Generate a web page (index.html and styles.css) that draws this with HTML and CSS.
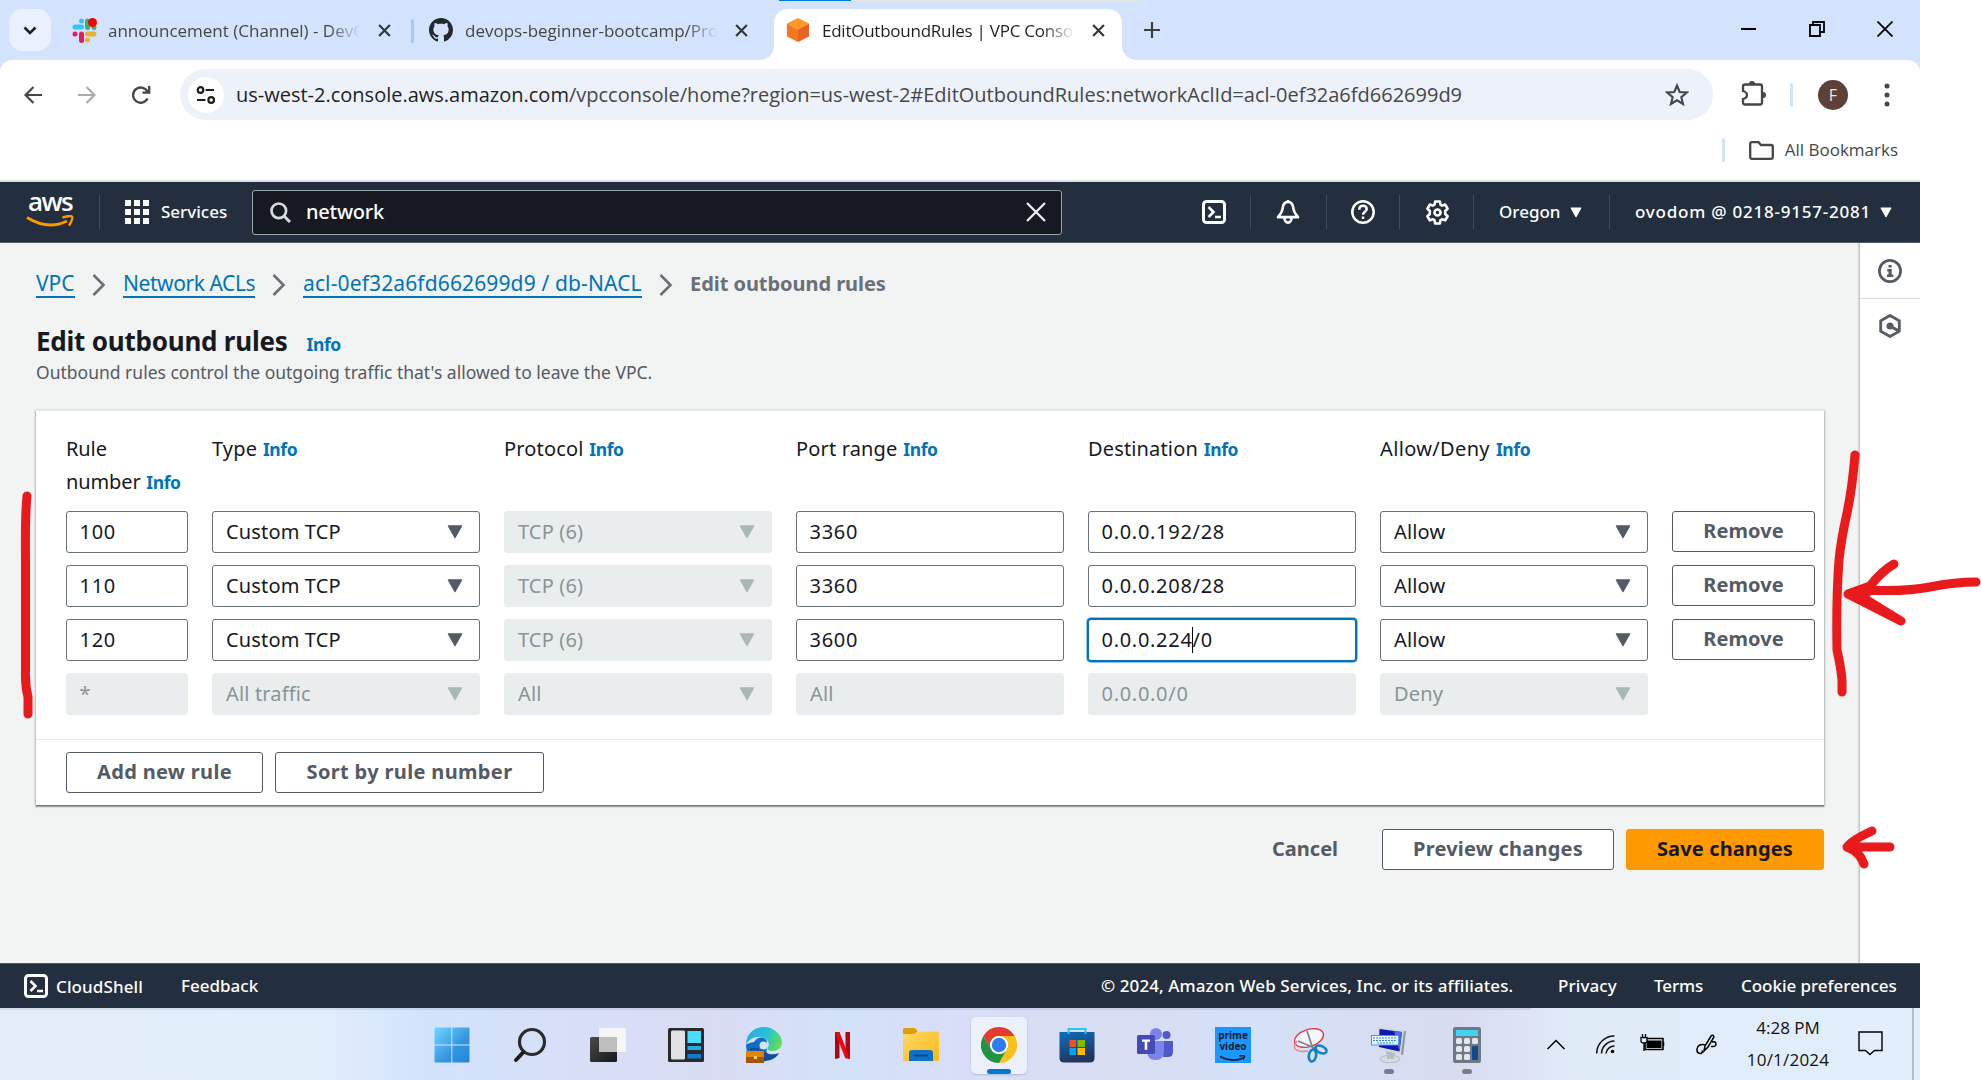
FILE: index.html
```html
<!DOCTYPE html>
<html lang="en">
<head>
<meta charset="utf-8">
<title>EditOutboundRules | VPC Console</title>
<link rel="stylesheet" href="styles.css">
</head>
<body>
<svg width="0" height="0" class="defs">
  <symbol id="x" viewBox="0 0 12 12"><path d="M1 1l10 10M11 1L1 11" fill="none" stroke="currentColor" stroke-width="2"/></symbol>
  <symbol id="tri" viewBox="0 0 16 14"><path d="M1.500 1h13L8 12.500z" fill="currentColor" stroke="currentColor" stroke-width="1.500" stroke-linejoin="round"/></symbol>
  <symbol id="shell" viewBox="0 0 24 24"><rect x="1.500" y="1.500" width="21" height="21" rx="3" fill="none" stroke="#fff" stroke-width="3"/><path d="M6.500 7l5 5-5 5M13 17h6" fill="none" stroke="#fff" stroke-width="2.600"/></symbol>
  <symbol id="chev" viewBox="0 0 14 22"><path d="M1.500 1l10 10-10 10" fill="none" stroke="#687078" stroke-width="2.600"/></symbol>
</svg>
<div class="window">
  <div class="tabstrip">
    <div class="tabsearch"><svg width="14" height="9" viewBox="0 0 14 9"><path d="M1.500 1.500L7 7l5.500-5.500" fill="none" stroke="#1f1f1f" stroke-width="2.600"/></svg></div>
    <div class="tab t1">
      <svg class="fav" width="25" height="25" viewBox="0 0 25 25" stroke-width="5" stroke-linecap="round"><path d="M3 9h6.500M9.500 3v0" stroke="#36c5f0"/><path d="M15.500 3v6.500" stroke="#2eb67d"/><path d="M22 9.500v0" stroke="#2eb67d"/><path d="M15.500 16H22M15.500 22v0" stroke="#ecb22e"/><path d="M9.500 16v6.500M3 16v0" stroke="#e01e5a"/><circle cx="20.500" cy="4.500" r="4.500" fill="#f00"/></svg>
      <span class="tabtext">announcement (Channel) - DevO</span>
      <svg class="close" width="13" height="13"><use href="#x"/></svg>
    </div>
    <i class="tabsep"></i>
    <div class="tab t2">
      <svg class="fav" width="24" height="24" viewBox="0 0 16 16"><path fill="#24292f" d="M8 0C3.580 0 0 3.580 0 8c0 3.540 2.290 6.530 5.470 7.590.4.070.55-.17.55-.38 0-.19-.01-.82-.01-1.490-2.010.37-2.530-.49-2.690-.94-.09-.23-.48-.94-.82-1.130-.28-.15-.68-.52-.01-.53.63-.01 1.080.58 1.230.82.72 1.210 1.870.87 2.330.66.070-.52.28-.87.51-1.070-1.780-.2-3.640-.89-3.640-3.950 0-.87.31-1.590.82-2.150-.08-.2-.36-1.020.08-2.120 0 0 .67-.21 2.200.82.64-.18 1.320-.27 2-.27s1.360.09 2 .27c1.530-1.040 2.200-.82 2.200-.82.44 1.100.16 1.920.08 2.120.51.56.82 1.270.82 2.150 0 3.070-1.870 3.750-3.650 3.950.29.25.54.73.54 1.480 0 1.070-.01 1.930-.01 2.200 0 .21.15.46.55.38A8.010 8.010 0 0 0 16 8c0-4.420-3.580-8-8-8z"/></svg>
      <span class="tabtext">devops-beginner-bootcamp/Pro</span>
      <svg class="close" width="13" height="13"><use href="#x"/></svg>
    </div>
    <div class="tab t3">
      <svg class="fav" width="22" height="24" viewBox="0 0 22 24"><path d="M11 0l11 5.500-11 6-11-6z" fill="#fd9827"/><path d="M0 5.500l11 6V24L0 18.500z" fill="#f6781e"/><path d="M22 5.500l-11 6V24l11-5.500z" fill="#ec6022"/></svg>
      <span class="tabtext">EditOutboundRules | VPC Conso</span>
      <svg class="close" width="13" height="13"><use href="#x"/></svg>
    </div>
    <svg class="plus" width="16" height="16" viewBox="0 0 16 16"><path d="M8 0v16M0 8h16" stroke="#3c4043" stroke-width="2.200"/></svg>
    <div class="winbtns">
      <svg width="16" height="16" viewBox="0 0 16 16"><path d="M0 8h15" stroke="#000" stroke-width="2"/></svg>
      <svg width="16" height="16" viewBox="0 0 16 16"><path d="M1 4h10v11H1zM4 4V1h11v10h-4" fill="none" stroke="#000" stroke-width="1.800"/></svg>
      <svg width="16" height="16" viewBox="0 0 16 16"><path d="M.5.5l15 15M15.500.5l-15 15" stroke="#000" stroke-width="1.800"/></svg>
    </div>
  </div>
  <div class="chrome">
    <div class="toolbar">
      <svg class="back" width="18" height="18" viewBox="0 0 18 18"><path d="M18 9H2M9.500 1L1.500 9l8 8" fill="none" stroke="#444746" stroke-width="2.200"/></svg>
      <svg class="fwd" width="18" height="18" viewBox="0 0 18 18"><path d="M0 9h16M8.500 1l8 8-8 8" fill="none" stroke="#a9abac" stroke-width="2.200"/></svg>
      <svg class="reload" width="20" height="20" viewBox="0 0 20 20"><path d="M16.500 13.500a7.600 7.600 0 1 1 .2-6.300M18.200 1v6.700h-6.700" fill="none" stroke="#444746" stroke-width="2.300"/></svg>
      <div class="omnibox">
        <div class="tune"><svg width="20" height="18" viewBox="0 0 20 18" fill="none" stroke="#1f1f1f" stroke-width="2.200"><circle cx="4.500" cy="4" r="2.800"/><path d="M9.500 4H18M1 14h8.500"/><circle cx="15.200" cy="14" r="2.800"/></svg></div>
        <span class="url"><b>us-west-2.console.aws.amazon.com</b>/vpcconsole/home?region=us-west-2#EditOutboundRules:networkAclId=acl-0ef32a6fd662699d9</span>
        <svg class="star" width="24" height="23" viewBox="0 0 24 23"><path d="M12 2.500l2.700 6.500 7 .5-5.400 4.600 1.700 6.900-6-3.700-6 3.700 1.700-6.900L2.300 9.500l7-.5z" fill="none" stroke="#444746" stroke-width="2.100"/></svg>
      </div>
      <svg class="puzzle" width="25" height="26" viewBox="0 0 25 26"><path d="M2 6.500q0-2 2-2h15q2 0 2 2v16q0 2-2 2H4q-2 0-2-2V19q4-1 4-4t-4-4z" fill="none" stroke="#444746" stroke-width="2.300"/><path d="M8 4a3 3 0 0 1 6 0zM22 12a3 3 0 0 1 0 6z" fill="#444746"/></svg>
      <i class="vsep"></i>
      <div class="avatar">F</div>
      <svg class="dots" width="6" height="26" viewBox="0 0 6 26" fill="#444746"><circle cx="3" cy="4" r="2.500"/><circle cx="3" cy="13" r="2.500"/><circle cx="3" cy="22" r="2.500"/></svg>
    </div>
    <div class="bookmarks">
      <i class="vsep"></i>
      <svg width="25" height="19" viewBox="0 0 25 19"><path d="M1.200 3q0-1.800 1.800-1.800h6.500L12 4h10q1.800 0 1.800 1.800V16q0 1.800-1.800 1.800H3Q1.200 17.800 1.200 16z" fill="none" stroke="#444746" stroke-width="2.300"/></svg>
      <span>All Bookmarks</span>
    </div>
  </div>
  <div class="awsnav">
    <div class="logo"><span>aws</span><svg width="48" height="14" viewBox="0 0 48 14"><path d="M1 2.500q21 13 40 3.500" fill="none" stroke="#f90" stroke-width="2.800"/><path d="M36.500 2.500q8-2.500 9.500-.8t-3 9" fill="none" stroke="#f90" stroke-width="2.400"/></svg></div>
    <i class="nsep s1"></i>
    <svg class="grid" width="24" height="24" viewBox="0 0 24 24" fill="#fff"><path d="M0 0h6v6H0zM9 0h6v6H9zM18 0h6v6h-6zM0 9h6v6H0zM9 9h6v6H9zM18 9h6v6h-6zM0 18h6v6H0zM9 18h6v6H9zM18 18h6v6h-6z"/></svg>
    <span class="services">Services</span>
    <div class="search">
      <svg width="21" height="21" viewBox="0 0 21 21"><circle cx="8.800" cy="8.800" r="7.300" fill="none" stroke="#d5dbdb" stroke-width="2.700"/><path d="M14 14l6 6" stroke="#d5dbdb" stroke-width="3"/></svg>
      <span>network</span>
      <svg class="clear" width="20" height="20" viewBox="0 0 20 20"><path d="M1 1l18 18M19 1L1 19" stroke="#eaeded" stroke-width="2.300"/></svg>
    </div>
    <svg class="i-shell" width="24" height="24"><use href="#shell"/></svg>
    <i class="nsep"></i>
    <svg class="i-bell" width="24" height="24" viewBox="0 0 24 24" fill="none" stroke="#fff" stroke-width="2.700"><path d="M12 2C8.500 2 6.800 5 6.500 9 6.200 12.500 4 14.500 2 17.200h20c-2-2.700-4.200-4.700-4.500-8.200C17.200 5 15.500 2 12 2z" stroke-linejoin="round"/><path d="M8.500 18a3.500 4.600 0 0 0 7 0M12 0v3"/></svg>
    <i class="nsep"></i>
    <svg class="i-help" width="24" height="24" viewBox="0 0 24 24" fill="none" stroke="#fff" stroke-width="2.500"><circle cx="12" cy="12" r="10.700"/><path d="M8.300 9.800q0-4 3.700-4t3.700 3.300c0 2.700-3.700 2.500-3.700 5.700M12 16.500V19"/></svg>
    <i class="nsep"></i>
    <svg class="i-gear" width="25" height="25" viewBox="0 0 24 24" fill="none" stroke="#fff" stroke-width="2.500" stroke-linejoin="round"><path d="M9.700 1.500h4.600l.6 3 1.500.9 3-1 2.300 4-2.300 2.100v2.900l2.300 2.200-2.300 3.900-3-1-1.500.9-.6 3.100H9.700l-.6-3.100-1.500-.9-3 1-2.300-3.900 2.300-2.200v-2.900L2.300 8.400l2.300-4 3 1 1.500-.9z"/><circle cx="12" cy="12" r="2.900"/></svg>
    <i class="nsep"></i>
    <span class="region">Oregon</span><svg class="ntri" width="12" height="11"><use href="#tri"/></svg>
    <i class="nsep s5"></i>
    <span class="acct">ovodom @ 0218-9157-2081</span><svg class="ntri" width="12" height="11"><use href="#tri"/></svg>
  </div>
  <div class="body">
    <div class="main">
      <div class="crumbs">
        <a class="c1">VPC</a><svg width="14" height="22"><use href="#chev"/></svg><a class="c2">Network ACLs</a><svg width="14" height="22"><use href="#chev"/></svg><a class="c3">acl-0ef32a6fd662699d9 / db-NACL</a><svg width="14" height="22"><use href="#chev"/></svg><b>Edit outbound rules</b>
      </div>
      <div class="title"><h1>Edit outbound rules</h1><a class="info">Info</a></div>
      <p class="sub">Outbound rules control the outgoing traffic that's allowed to leave the VPC.</p>
      <div class="card">
        <div class="rules">
          <div class="th">Rule<br>number <a class="info">Info</a></div>
          <div class="th">Type <a class="info">Info</a></div>
          <div class="th">Protocol <a class="info">Info</a></div>
          <div class="th">Port range <a class="info">Info</a></div>
          <div class="th">Destination <a class="info">Info</a></div>
          <div class="th wide">Allow/Deny <a class="info">Info</a></div>
          <div></div>

          <div class="f n">100</div>
          <div class="f">Custom TCP<svg width="16" height="14"><use href="#tri"/></svg></div>
          <div class="f d">TCP (6)<svg width="16" height="14"><use href="#tri"/></svg></div>
          <div class="f n">3360</div>
          <div class="f n">0.0.0.192/28</div>
          <div class="f">Allow<svg width="16" height="14"><use href="#tri"/></svg></div>
          <div class="btn">Remove</div>

          <div class="f n">110</div>
          <div class="f">Custom TCP<svg width="16" height="14"><use href="#tri"/></svg></div>
          <div class="f d">TCP (6)<svg width="16" height="14"><use href="#tri"/></svg></div>
          <div class="f n">3360</div>
          <div class="f n">0.0.0.208/28</div>
          <div class="f">Allow<svg width="16" height="14"><use href="#tri"/></svg></div>
          <div class="btn">Remove</div>

          <div class="f n">120</div>
          <div class="f">Custom TCP<svg width="16" height="14"><use href="#tri"/></svg></div>
          <div class="f d">TCP (6)<svg width="16" height="14"><use href="#tri"/></svg></div>
          <div class="f n">3600</div>
          <div class="f n focus">0.0.0.224<i class="caret"></i>/0</div>
          <div class="f">Allow<svg width="16" height="14"><use href="#tri"/></svg></div>
          <div class="btn">Remove</div>

          <div class="f n d">*</div>
          <div class="f d">All traffic<svg width="16" height="14"><use href="#tri"/></svg></div>
          <div class="f d">All<svg width="16" height="14"><use href="#tri"/></svg></div>
          <div class="f d">All</div>
          <div class="f n d">0.0.0.0/0</div>
          <div class="f d">Deny<svg width="16" height="14"><use href="#tri"/></svg></div>
        </div>
        <div class="cardfoot"><div class="btn add">Add new rule</div><div class="btn sort">Sort by rule number</div></div>
      </div>
      <div class="actions"><span class="cancel">Cancel</span><div class="btn preview">Preview changes</div><div class="btn save">Save changes</div></div>
    </div>
    <div class="side">
      <div class="sidecell"><svg width="24" height="24" viewBox="0 0 24 24"><circle cx="12" cy="12" r="10.600" fill="none" stroke="#545b64" stroke-width="2.700"/><path d="M10.500 6h3.200v2.500h-3.200zM9.300 10h4.400v5.500h1.600V18H9v-2.500h1.500v-3H9.300z" fill="#545b64"/></svg></div>
      <div class="sidecell"><svg width="24" height="24" viewBox="0 0 24 24"><path d="M12 1.500l9.300 5.200v10.600L12 22.500l-9.300-5.200V6.700z" fill="none" stroke="#545b64" stroke-width="2.800"/><circle cx="12" cy="12" r="3.500" fill="#545b64"/><path d="M12 12l8 4.500" stroke="#545b64" stroke-width="3"/></svg></div>
    </div>
  </div>
  <div class="footer">
    <svg width="24" height="24"><use href="#shell"/></svg><span class="f1">CloudShell</span><span class="f2">Feedback</span>
    <span class="f3">© 2024, Amazon Web Services, Inc. or its affiliates.</span><span class="f4">Privacy</span><span class="f5">Terms</span><span class="f6">Cookie preferences</span>
  </div>
  <div class="taskbar">
    <div class="apps">
      <div class="app"><svg width="36" height="36" viewBox="0 0 36 36"><defs><linearGradient id="w" x1="0" y1="0" x2="1" y2="1"><stop stop-color="#6fd6ff"/><stop offset=".6" stop-color="#3596e0"/><stop offset="1" stop-color="#1f86d8"/></linearGradient></defs><path d="M1.500.5h15.800v17H.5v-16a1 1 0 0 1 1-1zM18.300.5h16.200a1 1 0 0 1 1 1v16H18.300zM.5 18.500h16.800v17H1.500a1 1 0 0 1-1-1zM18.300 18.500h17.200v16a1 1 0 0 1-1 1H18.300z" fill="url(#w)"/></svg></div>
      <div class="app"><svg width="34" height="36" viewBox="0 0 34 36"><circle cx="19" cy="15" r="12.500" fill="none" stroke="#2b2b2b" stroke-width="3.200"/><path d="M10.500 25L3 33" stroke="#1c1c1c" stroke-width="4" stroke-linecap="round"/></svg></div>
      <div class="app"><svg width="36" height="36" viewBox="0 0 36 36"><defs><linearGradient id="tv" x1="0" y1="0" x2="1" y2="1"><stop stop-color="#4a4a4a"/><stop offset="1" stop-color="#181818"/></linearGradient></defs><rect y="10" width="27" height="25" rx="1.500" fill="url(#tv)"/><rect x="9" y="1" width="27" height="24" rx="1.500" fill="#f6f6f6"/><rect x="9" y="10" width="18" height="15" fill="#bdbdbd"/></svg></div>
      <div class="app"><svg width="36" height="36" viewBox="0 0 36 36"><rect y="1" width="36" height="34" rx="1.500" fill="#2a2a2a"/><rect x="3" y="3.500" width="14" height="29" rx="1.500" fill="#dfe1e4"/><path d="M19.500 4H33v12H19.500z" fill="#4cdcff"/><path d="M19.500 19H33v4H19.500z" fill="#27a9e8"/><path d="M19.500 27H33v4.500H19.500z" fill="#0a7ad8"/></svg></div>
      <div class="app"><svg width="36" height="36" viewBox="0 0 36 36"><defs><linearGradient id="e1" x1="0" y1=".3" x2="1" y2=".6"><stop stop-color="#2babe8"/><stop offset=".5" stop-color="#25c0d8"/><stop offset="1" stop-color="#62e04e"/></linearGradient></defs><path d="M8 15c4-6 13-6 13 1l-1 18C8 37 0 29 0 18q2-2 8-3z" fill="#0c6fd0"/><path d="M18 34c8 0 13-4 15-8-7 3-15 1-17-6-3 4-2 10 2 14z" fill="#104f96"/><path d="M0 18C0 7 8 0 18 0s18 8 18 15c0 6-5 9-9 9-3 0-7-1-5-4 2-2 1-6-4-9C12 8 4 10 0 18z" fill="url(#e1)"/><circle cx="17.500" cy="18.500" r="4" fill="#d5e5fa"/><path d="M0 24h18v12H0z" fill="#e58200"/><path d="M0 30h18v6H0z" fill="#a35507"/><path d="M5 24v-2h7v2" fill="none" stroke="#23405c" stroke-width="1.500"/><path d="M8 29h3v3H8z" fill="#ffd84a"/></svg></div>
      <div class="app"><svg width="15" height="28" viewBox="0 0 15 28"><path d="M0 1h4.500v26L0 28zM10.500 1H15v27l-4.500-1z" fill="#b1060f"/><path d="M0 1h4.500L15 28l-4.800-1z" fill="#e50914"/></svg></div>
      <div class="app"><svg width="36" height="36" viewBox="0 0 36 36"><defs><linearGradient id="fo" x1="0" y1="0" x2="1" y2="1"><stop stop-color="#ffd866"/><stop offset="1" stop-color="#f9b916"/></linearGradient></defs><path d="M0 8V2.500Q0 1 1.500 1H11q2 0 3.500 3.500L10 9z" fill="#dd9f08"/><path d="M0 7h11l4-2.500h19.500Q36 4.500 36 6v28H0z" fill="url(#fo)"/><path d="M6 34V26q0-3 3-3h18q3 0 3 3v8z" fill="#0f71c9"/><path d="M11 28.500h14" stroke="#0b4a8f" stroke-width="2"/></svg></div>
      <div class="app active"><svg width="36" height="36" viewBox="0 0 36 36"><path d="M18 0a18 18 0 0 1 15.600 9H18a9 9 0 0 0-7.800 13.500L2.400 9A18 18 0 0 1 18 0z" fill="#e33b2e"/><path d="M33.600 9A18 18 0 0 1 18 36l7.800-13.500A9 9 0 0 0 25.800 13.500L18 9z" fill="#fbc116"/><path d="M2.400 9l7.800 13.500A9 9 0 0 0 25.800 22.500L18 36A18 18 0 0 1 2.400 9z" fill="#229342"/><circle cx="18" cy="18" r="9" fill="#fff"/><circle cx="18" cy="18" r="7.200" fill="#2d7cf0"/></svg><i class="pill"></i></div>
      <div class="app"><svg width="36" height="36" viewBox="0 0 36 36"><defs><linearGradient id="st" x1="0" y1="0" x2=".3" y2="1"><stop stop-color="#0a6fbd"/><stop offset="1" stop-color="#25345e"/></linearGradient></defs><path d="M.5 5h35v26q0 4.500-4.500 4.500H5Q.5 35.500.5 31z" fill="url(#st)"/><path d="M9.500 7V2h17v5" fill="none" stroke="#1fc8f5" stroke-width="2"/><path d="M10.500 13H17v7h-6.500z" fill="#f25022"/><path d="M18.500 13H26v7h-7.500z" fill="#7fba00"/><path d="M10.500 21H17v7h-6.500z" fill="#00a4ef"/><path d="M18.500 21H26v7h-7.500z" fill="#ffb900"/></svg></div>
      <div class="app"><svg width="36" height="36" viewBox="0 0 36 36"><circle cx="29.500" cy="8" r="4" fill="#5059c9"/><path d="M26 14h9q1 0 1 1v10q0 5-5 5h-5z" fill="#5059c9"/><circle cx="19" cy="7" r="6" fill="#7b83eb"/><path d="M10 14h17v10q0 9-8.500 9T10 24z" fill="#7b83eb"/><rect y="8" width="18" height="19" rx="1.500" fill="#444bb4"/><path d="M5 12.500h8v2.300h-2.700v8H7.700v-8H5z" fill="#fff"/></svg></div>
      <div class="app"><div class="prime"><span>prime</span><span>video</span><svg width="26" height="7" viewBox="0 0 26 7"><path d="M0 1.500q12 6.500 23 1.500M19.500.8q5-.8 5 .2t-1.500 3.500" fill="none" stroke="#0c1c2c" stroke-width="1.700"/></svg></div></div>
      <div class="app"><svg width="36" height="36" viewBox="0 0 36 36" fill="none"><ellipse cx="16" cy="11" rx="15" ry="8.500" transform="rotate(-18 16 11)" fill="#f4f4fb" stroke="#e5393a" stroke-width="1.400"/><path d="M4 14C-2 21 3 26 15 24" stroke="#e98484" stroke-width="1.300"/><path d="M14 4l6 18M5 14l19 8" stroke="#7d8288" stroke-width="1.700"/><ellipse cx="19.500" cy="28.500" rx="3.600" ry="6" transform="rotate(10 19.500 28.500)" stroke="#1581c5" stroke-width="2.600"/><ellipse cx="28" cy="22.500" rx="6" ry="3.400" transform="rotate(25 28 22.500)" stroke="#1581c5" stroke-width="2.600"/></svg></div>
      <div class="app"><svg width="36" height="36" viewBox="0 0 36 36"><ellipse cx="19" cy="32" rx="10" ry="3.800" fill="#d9dcdf" stroke="#a9aeb4" stroke-width=".8"/><path d="M15 23l9 2-1 7h-7z" fill="#b9bec4"/><path d="M7 0l28 4-3 24-26-6z" fill="#d4d8dd"/><path d="M35 4l-3 24-2-.5L33 4z" fill="#8f969e"/><path d="M8.500 2L31 5l-2.500 19.500L8 20z" fill="#0b1bb0"/><path d="M23 4l8 1-2.500 19.500z" fill="#4f6be8"/><rect x=".5" y="8.500" width="27" height="9.500" fill="#e8f4ff" stroke="#3f9be8"/><path d="M2 11h24M2 13.500h24M6 16h16" stroke="#3787d0" stroke-dasharray="2 1"/></svg><i class="dot"></i></div>
      <div class="app"><svg width="28" height="36" viewBox="0 0 28 36"><rect width="28" height="36" rx="2" fill="#6d7a84"/><rect x="3" y="3" width="22" height="6" fill="#3fd3f5"/><g fill="#e3e7ea"><rect x="3" y="11" width="6" height="6" rx="1.500"/><rect x="11" y="11" width="6" height="6" rx="1.500"/><rect x="19" y="11" width="6" height="6" rx="1.500"/><rect x="3" y="19" width="6" height="6" rx="1.500"/><rect x="11" y="19" width="6" height="6" rx="1.500"/><rect x="3" y="27" width="6" height="6" rx="1.500"/><rect x="11" y="27" width="6" height="6" rx="1.500"/></g><rect x="19" y="19" width="6" height="14" rx="1" fill="#0e4a91"/></svg><i class="dot"></i></div>
    </div>
    <div class="tray">
      <svg class="up" width="18" height="11" viewBox="0 0 18 11"><path d="M.5 10L9 1.500l8.500 8.500" fill="none" stroke="#000" stroke-width="1.500"/></svg>
      <svg class="wifi" width="19" height="19" viewBox="0 0 19 19" fill="none" stroke="#111" stroke-width="1.500"><path d="M.7 18.500A17.500 17.500 0 0 1 18.500 1M5.500 18.500A13 13 0 0 1 18.500 6M10 18.500a8.500 8.500 0 0 1 8.500-7.500"/><circle cx="16.500" cy="16.500" r="1.800" fill="#000" stroke="none"/></svg>
      <svg class="batt" width="25" height="18" viewBox="0 0 25 18"><path d="M5 4.500h18v11H5zM23.500 8v4" fill="none" stroke="#000" stroke-width="1.600"/><path d="M6.500 6.500h15v7.500h-15z"/><path d="M1 3.500h6V7q0 2-3 2T1 7zM2.500 0v3.500M5.500 0v3.500M4 9v8" fill="#e6eff9" stroke="#000" stroke-width="1.300"/></svg>
      <svg class="pen" width="21" height="21" viewBox="0 0 21 21" fill="none" stroke="#000" stroke-width="1.500"><path d="M8 17l1-5 6-10q2-2 3 1l-6 10zM10 11q-8-2-9 4-.5 4 3 4.500 3 0 2-3M16 8q4-1 4 2t-5 2.500"/></svg>
      <div class="clock"><span>4:28 PM</span><span>10/1/2024</span></div>
      <svg class="note" width="26" height="25" viewBox="0 0 26 25"><path d="M1 1h23v18.500h-7.500L12 23.500l-4.500-4H1z" fill="none" stroke="#000" stroke-width="1.400"/></svg>
      <i class="peek"></i>
    </div>
  </div>
</div>
<svg class="marks" width="1981" height="1080" viewBox="0 0 1981 1080" fill="none" stroke="#e81a1c" stroke-width="9" stroke-linecap="round" stroke-linejoin="round">
  <path d="M27 496Q25 515 25.500 560V670Q25 685 28 697V714"/>
  <path d="M1855 455Q1852 490 1847 513Q1841 540 1839 560Q1836 600 1837 650Q1841 668 1842 680V692"/>
  <path d="M1976 582Q1955 582 1930 587Q1905 592 1866 590M1894 564Q1882 571 1870 586L1848 594L1901 621L1862 597L1870 590"/>
  <path d="M1890 847H1850M1872 831Q1852 840 1847 847Q1860 852 1864 864"/>
</svg>
</body>
</html>
```
FILE: styles.css
```css
* { box-sizing: border-box; }
body { margin: 0; width: 1981px; height: 1080px; overflow: hidden; background: #fff; font-family: "Noto Sans", "Open Sans", sans-serif; color: #16191f; position: relative; white-space: nowrap; }
svg { display: block; flex: none; }
i { display: block; flex: none; }
.defs { position: absolute; }
.window { width: 1920px; height: 1080px; display: flex; flex-direction: column; background: linear-gradient(#d3e3fd, #d3e3fd) 0 50px / 1920px 40px no-repeat; }

/* browser tabs */
.tabstrip { height: 60px; display: flex; align-items: flex-start; padding-top: 9px; font: 17px/24px "Open Sans", sans-serif; color: #444746;
  background: linear-gradient(#0078d7, #0078d7) 779px 0 / 72px 1px no-repeat, linear-gradient(#e5e5e5, #e5e5e5) 851px 0 / 290px 1px no-repeat, #d3e3fd; }
.tabsearch { width: 42px; height: 42px; margin-left: 9px; border-radius: 14px; background: #e9f1fe; display: flex; align-items: center; justify-content: center; }
.tab { display: flex; height: 51px; padding-top: 9px; }
.t1 { margin-left: 21px; width: 339px; }
.t2 { margin-left: 15px; width: 345px; }
.t3 { position: relative; width: 348px; background: #fff; border-radius: 14px 14px 0 0; padding-left: 13px; color: #1f1f1f; }
.t3::before, .t3::after { content: ""; position: absolute; bottom: 0; width: 14px; height: 14px; }
.t3::before { left: -14px; background: radial-gradient(circle at 0 0, transparent 13.5px, #fff 14px); }
.t3::after { right: -14px; background: radial-gradient(circle at 100% 0, transparent 13.5px, #fff 14px); }
.tabtext { width: 262px; margin-left: 12px; padding-top: 1px; -webkit-mask-image: linear-gradient(90deg, #000 220px, transparent 253px); mask-image: linear-gradient(90deg, #000 220px, transparent 253px); }
.t1 .tabtext { margin-left: 11px; }
.t3 .tabtext { margin-left: 13px; letter-spacing: -.25px; }
.close { margin: 6px 0 0 8px; color: #33363a; }
.tabsep { width: 3px; height: 24px; margin-top: 10px; background: #a8c7fa; border-radius: 2px; }
.plus { margin: 13px 0 0 22px; }
.winbtns { margin: 12px 27px 0 auto; display: flex; gap: 52px; }

/* address bar */
.chrome { height: 122px; background: #fff; border-bottom: 2px solid #dedfe0; border-radius: 12px 12px 0 0; font-family: "Open Sans", sans-serif; color: #444746; }
.toolbar { display: flex; align-items: center; height: 51px; margin-top: 9px; padding-left: 24px; }
.fwd { margin-left: 36px; }
.reload { margin-left: 35px; }
.omnibox { width: 1533px; height: 51px; margin-left: 29px; border-radius: 26px; background: #ecf1fa; display: flex; align-items: center; padding-left: 8px; }
.tune { width: 36px; height: 36px; border-radius: 50%; background: #fff; display: flex; align-items: center; justify-content: center; }
.url { margin-left: 12px; font-size: 20px; line-height: 30px; color: #474747; }
.url b { font-weight: 400; color: #1f1f1f; }
.star { margin: 0 24px 0 auto; }
.puzzle { margin-left: 28px; margin-top: -3px; }
.vsep { width: 3px; height: 24px; background: #d3e3fd; border-radius: 2px; }
.toolbar .vsep { margin-left: 24px; }
.avatar { width: 30px; height: 30px; margin-left: 25px; border-radius: 50%; background: #5d4037; color: #f1e9e6; font-size: 16px; line-height: 30px; text-align: center; }
.dots { margin-left: 36px; }
.bookmarks { display: flex; align-items: center; justify-content: flex-end; height: 60px; padding-right: 22px; font-size: 17px; }
.bookmarks span { margin-top: -2px; }
.bookmarks svg { margin: 0 11px 0 24px; }

/* console header */
.awsnav { height: 61px; background: #232f3e; border-bottom: 1px solid #545b64; display: flex; align-items: center; color: #fff; font-weight: 500; font-size: 17px; }
.awsnav > span, .search span { padding-bottom: 2px; }
.logo { width: 48px; height: 36px; margin-left: 26px; display: flex; flex-direction: column; }
.logo span { font: 600 26px/26px "Open Sans", sans-serif; letter-spacing: -1.6px; text-align: center; height: 20px; margin-top: -6px; }
.logo svg { margin-top: 7px; }
.nsep { width: 1px; height: 34px; background: #414d5c; }
.s1 { margin: 0 25px; }
.services { margin-left: 12px; width: 66px; }
.search { width: 810px; height: 45px; margin-left: 25px; border: 1px solid #95a5a6; border-radius: 3px; background: #161920; display: flex; align-items: center; padding: 0 15px 0 17px; font-size: 20px; letter-spacing: -.25px; }
.search span { margin-left: 15px; }
.clear { margin-left: auto; }
.i-shell { margin: 0 24px 0 140px; }
.i-bell { margin: 0 26px 0 25px; }
.i-help { margin: 0 24px; }
.i-gear { margin: 0 23px 0 25px; }
.region { margin-left: 25px; width: 62px; }
.ntri { margin-left: 9px; }
.s5 { margin: 0 25px 0 27px; }
.acct { width: 236px; letter-spacing: .78px; }

/* page */
.body { height: 720px; display: flex; background: #f2f3f3; }
.main { width: 1859px; padding: 27px 35px 0 36px; }
.crumbs { display: flex; height: 28px; font-size: 21px; line-height: 27px; color: #687078; }
.crumbs a { height: 28px; color: #0073bb; border-bottom: 2px solid #0073bb; }
.crumbs svg { margin: 4px 17px 0; }
.c1 { width: 39px; }
.c2 { width: 132px; letter-spacing: -.43px; }
.c3 { width: 339px; letter-spacing: .13px; }
.crumbs b { font-size: 20px; letter-spacing: -.05px; }
.info { color: #0073bb; font-weight: 700; font-size: 17.500px; letter-spacing: -.4px; }
.title { display: flex; align-items: baseline; height: 30px; margin-top: 28px; }
h1 { margin: 0 19px 0 0; font-size: 26px; line-height: 30px; letter-spacing: -.22px; }
.sub { margin: 4px 0 0; font-size: 17.500px; line-height: 25px; color: #545b64; }
.card { width: 1788px; height: 395px; margin-top: 25px; background: #fff; box-shadow: 0 1px 1px rgba(0,28,36,.3), 0 1px 2px 1px rgba(0,28,36,.2), 0 2px 1px rgba(0,28,36,.2); border-top: 1px solid #e6e8e8; padding-top: 21px; }
.rules { display: grid; grid-template-columns: 122px 268px 268px 268px 268px 268px 143px; grid-template-rows: 67px 42px 42px 42px 42px; gap: 12px 24px; padding: 0 0 24px 30px; height: 307px; }
.th { font-size: 20px; line-height: 33px; letter-spacing: .15px; }
.th:first-child { letter-spacing: -.1px; }
.wide { letter-spacing: .35px; }
.th .info { letter-spacing: -.4px; margin-left: .5px; }
.f { height: 42px; border: 1px solid #687078; border-radius: 3px; background: #fff; padding: 0 16px 1px 13px; display: flex; align-items: center; font-size: 20px; letter-spacing: .15px; color: #16191f; }
.f svg { margin-left: auto; color: #545b64; }
.n { letter-spacing: .7px; padding-left: 12.500px; }
.d { background: #eaeded; border-color: #eaeded; color: #879596; }
.d svg { color: #aab7b8; }
.focus { border-color: #0073bb; box-shadow: 0 0 0 1px #0073bb, 0 0 0 2px #8fc3e6; }
.caret { width: 1px; height: 26px; margin: 0 0 0 -1px; background: #000; }
.btn { height: 41px; border: 1px solid #545b64; border-radius: 3px; background: #fff; color: #545b64; font-weight: 700; font-size: 20px; line-height: 38px; text-align: center; letter-spacing: .1px; }
.rules .btn { line-height: 37px; }
.cardfoot { display: flex; gap: 12px; border-top: 1px solid #eaeded; padding: 12px 30px 0; }
.add { width: 197px; letter-spacing: .33px; }
.sort { width: 269px; letter-spacing: .35px; }
.actions { display: flex; justify-content: flex-end; margin-top: 24px; }
.cancel { width: 66px; margin-right: 44px; font-weight: 700; font-size: 20px; line-height: 40px; color: #545b64; }
.preview { width: 232px; letter-spacing: .22px; }
.save { width: 198px; margin-left: 12px; background: #f90; border-color: #f90; color: #16191f; letter-spacing: .13px; }
.side { width: 61px; background: #fff; border-left: 1px solid #c4c9c9; box-shadow: -1px 0 1px rgba(0,28,36,.12); }
.sidecell { height: 56px; border-bottom: 1px solid #d5dbdb; padding: 16px 0 0 18px; }
.sidecell + .sidecell { border: 0; padding-top: 15px; }

/* console footer */
.footer { height: 45px; background: #232f3e; border-top: 1px solid #545b64; display: flex; align-items: center; color: #fff; font-weight: 500; font-size: 17px; padding-left: 24px; }
.footer span { padding-bottom: 2px; }
.footer .f1 { padding-bottom: 0; }
.f1 { margin-left: 8px; width: 88px; letter-spacing: .1px; }
.f2 { margin-left: 37px; width: 77px; }
.f3 { margin-left: 843px; width: 412px; letter-spacing: .1px; }
.f4 { margin-left: 45px; width: 59px; letter-spacing: .1px; }
.f5 { margin-left: 37px; width: 50px; letter-spacing: -.1px; }
.f6 { margin-left: 37px; letter-spacing: -.04px; }

/* taskbar */
.taskbar { height: 72px; display: flex; background: linear-gradient(90deg, #e2ecf6 0, #e1eefa 320px, #d3e3fc 420px, #d7dff7 580px, #d9dcf3 720px, #d3e2f9 840px, #d8def7 960px, #d8ddf2 1120px, #d4e1f7 1250px, #d9dcf0 1460px, #e0ebf8 1580px, #e1eefb 100%); }
.apps { display: flex; padding-left: 413px; width: 1531px; border-top: 2px solid rgba(120,140,170,.18); }
.app { width: 78.100px; height: 70px; display: flex; align-items: center; justify-content: center; position: relative; }
.active::before { content: ""; position: absolute; left: 11px; top: 7px; width: 56px; height: 57px; border-radius: 5px; background: #ebf0fb; box-shadow: 0 1px 2px rgba(60,80,120,.25); }
.active svg { position: relative; }
.pill { position: absolute; left: 27px; top: 59px; width: 24px; height: 5px; border-radius: 3px; background: #0078d4; }
.dot { position: absolute; left: 34px; top: 59px; width: 10px; height: 5px; border-radius: 3px; background: #7c7e88; }
.prime { width: 36px; height: 36px; background: #1a98ff; color: #0c1c2c; font: 700 10px/11px "Open Sans", sans-serif; display: flex; flex-direction: column; align-items: center; padding-top: 3px; }
.prime svg { margin-top: 3px; }
.tray { display: flex; align-items: center; width: 389px; font: 17px/32px "Open Sans", sans-serif; color: #111; }
.up { margin-left: 16px; }
.wifi { margin-left: 31px; }
.batt { margin: -2px 0 0 25px; }
.pen { margin-left: 31px; }
.clock { width: 84px; margin: -1px 0 0 29px; display: flex; flex-direction: column; align-items: center; }
.clock span + span { letter-spacing: .2px; }
.note { margin-left: 28px; margin-top: -1px; }
.peek { width: 2px; height: 72px; margin-left: 28px; background: #b4bdc8; }

.marks { position: absolute; left: 0; top: 0; }
```
